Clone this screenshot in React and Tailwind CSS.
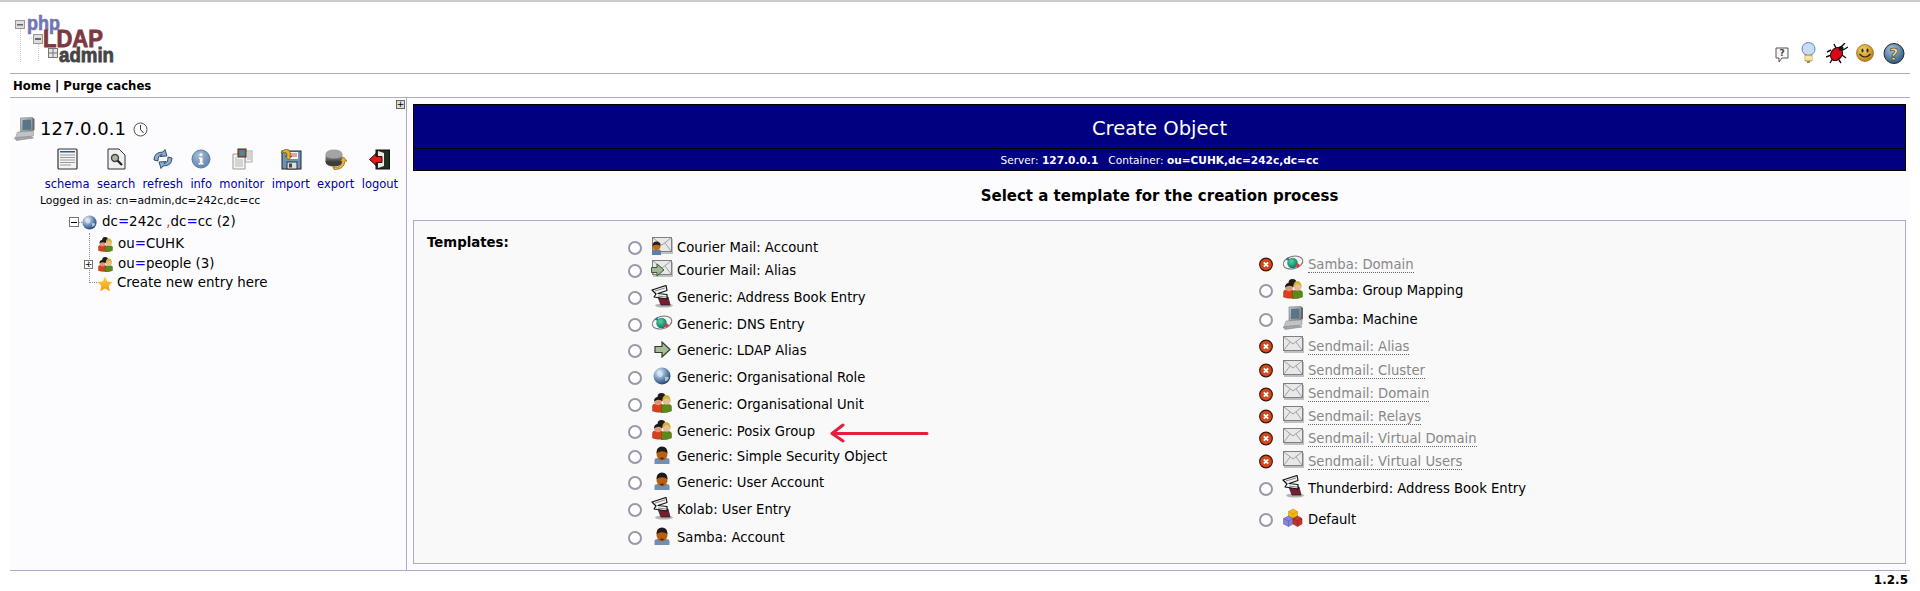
import React from 'react'

function Defs() {
  return (
    <svg className="absolute w-0 h-0">
      <defs>
        <radialGradient id="globe" cx="35%" cy="30%" r="75%">
          <stop offset="0%" stopColor="#f2f6fa" />
          <stop offset="45%" stopColor="#7ea2c8" />
          <stop offset="100%" stopColor="#1d3f66" />
        </radialGradient>
        <radialGradient id="dnsglobe" cx="40%" cy="35%" r="70%">
          <stop offset="0%" stopColor="#5fd08a" />
          <stop offset="60%" stopColor="#1f9a78" />
          <stop offset="100%" stopColor="#15608e" />
        </radialGradient>
        <radialGradient id="smile" cx="40%" cy="30%" r="75%">
          <stop offset="0%" stopColor="#f8d060" />
          <stop offset="100%" stopColor="#b87a10" />
        </radialGradient>
        <radialGradient id="help" cx="40%" cy="30%" r="75%">
          <stop offset="0%" stopColor="#a9c6dc" />
          <stop offset="100%" stopColor="#2a5577" />
        </radialGradient>
        <radialGradient id="info" cx="40%" cy="30%" r="75%">
          <stop offset="0%" stopColor="#a8c0dc" />
          <stop offset="100%" stopColor="#5a7ea8" />
        </radialGradient>
        <linearGradient id="star" x1="0" y1="0" x2="0" y2="1">
          <stop offset="0%" stopColor="#ffd23c" />
          <stop offset="100%" stopColor="#f79a10" />
        </linearGradient>
        <linearGradient id="disk" x1="0" y1="0" x2="0" y2="1">
          <stop offset="0%" stopColor="#b0b0b0" />
          <stop offset="100%" stopColor="#3c3c3c" />
        </linearGradient>
        <linearGradient id="pc" x1="0" y1="0" x2="1" y2="1">
          <stop offset="0%" stopColor="#c4c8cc" />
          <stop offset="100%" stopColor="#7c8288" />
        </linearGradient>
      </defs>
    </svg>
  )
}

function Logo() {
  const font = "'Liberation Sans', sans-serif"
  return (
    <svg width="104" height="58" viewBox="0 -6 104 58">
      <g stroke="#c8c8c8" strokeDasharray="1 1" fill="none">
        <path d="M5.5 13V48M23.5 28V48M14 24H18M33 39H38" />
      </g>
      <rect x="0.5" y="6.5" width="9" height="8" fill="#ddd" stroke="#999" />
      <rect x="2" y="10" width="6" height="1.5" fill="#666" />
      <rect x="18.5" y="20.5" width="9" height="9" fill="#ddd" stroke="#999" />
      <rect x="20" y="24" width="6" height="2" fill="#666" />
      <rect x="33.5" y="34.5" width="9" height="9" fill="#e4e4e4" stroke="#777" />
      <path d="M38 35V43M34 39H42" stroke="#777" />
      <text x="12" y="16" fontFamily={font} fontWeight="700" fontSize="20" fill="#7474b4" stroke="#7474b4" strokeWidth="0.6" textLength="33" lengthAdjust="spacingAndGlyphs">php</text>
      <text x="28" y="33" fontFamily={font} fontWeight="700" fontSize="23" fill="#7c3a40" stroke="#7c3a40" strokeWidth="0.8" textLength="60" lengthAdjust="spacingAndGlyphs">LDAP</text>
      <text x="44" y="48" fontFamily={font} fontWeight="700" fontSize="21" fill="#444" stroke="#444" strokeWidth="0.8" textLength="55" lengthAdjust="spacingAndGlyphs">admin</text>
    </svg>
  )
}

function MailIcon({ children }) {
  return (
    <svg width="22" height="18" viewBox="0 0 22 18">
      <rect x="2" y="2" width="20" height="15" fill="#9a9a9a" opacity="0.6" />
      <rect x="1.5" y="0.5" width="19" height="14" fill="#e8e8e8" stroke="#808080" />
      <path d="M2 1L11 8L20 1M2 14L8 6M20 14L14 6" fill="none" stroke="#a0a0a0" />
      {children}
    </svg>
  )
}

const MailUser = () => (
  <MailIcon>
    <path d="M1 18V14.5Q1 12.5 4 12.5H7Q10 12.5 10 14.5V18Z" fill="#5f7fa8" />
    <circle cx="5.5" cy="9" r="4" fill="#c86a10" />
    <path d="M1.5 9Q1.5 4.5 5.5 4.5T9.5 9Q5.5 6.5 1.5 9Z" fill="#222" />
  </MailIcon>
)

const MailAlias = () => (
  <MailIcon>
    <path d="M0.5 7.5H6V4L13 10L6 16V12.5H0.5Z" fill="#a3b894" stroke="#3f5a34" />
  </MailIcon>
)

const BookIcon = () => (
  <svg width="22" height="23" viewBox="0 0 22 23">
    <ellipse cx="13" cy="20.5" rx="9" ry="2" fill="#b4b4b4" />
    <path d="M7 12L17 12L19 20L10 20Z" fill="#7c1c30" stroke="#222" strokeWidth="0.8" />
    <path d="M1 5L15 0.5L16 5.5L7 8.5L16 9.5L16 14L3 12L5 9Z" fill="#f6f6f6" stroke="#111" strokeWidth="1.2" strokeLinejoin="round" />
    <path d="M4 6L14 3M7 11L15 12" stroke="#777" strokeWidth="0.9" />
  </svg>
)

const DnsIcon = () => (
  <svg width="23" height="18" viewBox="0 0 23 18">
    <ellipse cx="11.5" cy="8.5" rx="10.5" ry="6.5" fill="#f4f4f4" stroke="#777" strokeWidth="1.1" transform="rotate(-15 11.5 8.5)" />
    <circle cx="11" cy="9" r="5.5" fill="url(#dnsglobe)" />
    <circle cx="16.5" cy="11.5" r="2" fill="#e23b3b" />
    <circle cx="6" cy="5" r="1.5" fill="#2d6fb4" />
  </svg>
)

const ArrowIcon = () => (
  <svg width="17" height="17" viewBox="0 0 17 17">
    <path d="M1 5.5H8V1L16 8.5L8 16V11.5H1Z" fill="#a8bb9a" stroke="#2f3f28" strokeWidth="1.2" />
  </svg>
)

const GlobeIcon = ({ size = 18 }) => (
  <svg width={size} height={size} viewBox="0 0 18 18">
    <circle cx="9" cy="9" r="8.5" fill="url(#globe)" />
    <path d="M4 6Q7 4 9 6T8 10Q5 11 4 6ZM12 10Q15 9 16 11Q14 15 12 14Z" fill="#dce4ee" opacity="0.7" />
  </svg>
)

const GroupIcon = ({ size = 20 }) => (
  <svg width={size} height={size} viewBox="0 0 20 20">
    <circle cx="9.5" cy="4" r="4" fill="#1c1c1c" />
    <path d="M0.5 18V13Q0.5 11 3 11H9Q11 11 11 14V19Q5 20 0.5 18Z" fill="#d8401c" stroke="#7c2410" strokeWidth="0.4" />
    <path d="M9.5 20V14Q9.5 11.5 12 11.5H17Q19.5 11.5 19.5 14V18Q15 20 9.5 20Z" fill="#5c8a18" stroke="#34500c" strokeWidth="0.4" />
    <circle cx="6" cy="8.5" r="3.8" fill="#d89878" />
    <path d="M2 8.5Q2 4 6 4T10 8Q6 5.5 2 8.5Z" fill="#181818" />
    <circle cx="14.5" cy="7.500" r="4" fill="#e8bc90" />
    <path d="M10.5 7.5Q10.5 2 14.5 2T18.5 9Q17.5 5 14 5Q12 6 10.5 7.5Z" fill="#d0b030" />
  </svg>
)

const UserIcon = () => (
  <svg width="16" height="18" viewBox="0 0 16 18">
    <path d="M0.5 18V14Q0.5 12 4 12H12Q15.5 12 15.5 14V18Z" fill="#6f8fb4" />
    <path d="M7 12L8 15L9 12Z" fill="#dfe8f0" />
    <ellipse cx="8" cy="8" rx="5.5" ry="6.5" fill="#b85e10" />
    <path d="M2.5 7Q2.5 0.5 8 0.5T13.5 7Q8 3.5 2.5 7Z" fill="#1e1a18" />
    <path d="M6 12Q8 15 10 12Q8 11 6 12Z" fill="#4a2408" />
  </svg>
)

const ComputerIcon = ({ className }) => (
  <svg className={className} viewBox="0 0 20 24">
    <path d="M6 1L18 0.5V14L6 15Z" fill="url(#pc)" stroke="#777" strokeWidth="0.6" />
    <path d="M8 3L16.5 2.5V12.5L8 13Z" fill="#5a7488" />
    <path d="M18 0.5L20 2V13L18 14Z" fill="#666" />
    <path d="M3 15L19 14V19L1 20.5Z" fill="#c0c4c8" stroke="#888" strokeWidth="0.5" />
    <path d="M0 21L16 19.5L19 21L2 23.5Z" fill="#a4a9ae" stroke="#777" strokeWidth="0.5" />
  </svg>
)

const CubesIcon = () => (
  <svg width="22" height="20" viewBox="0 0 22 20">
    <path d="M11 1L15.5 3.5V9L11 11.5L6.5 9V3.5Z" fill="#f7b90f" stroke="#b88410" strokeWidth="0.5" />
    <path d="M6.5 3.5L11 6L15.5 3.5M11 6V11.5" fill="none" stroke="#b88410" strokeWidth="0.5" />
    <path d="M6.5 8L11 10.5V16L6.5 18.5L1.5 16V10.5Z" fill="#8484dc" stroke="#55559c" strokeWidth="0.5" />
    <path d="M1.5 10.5L6.5 13L11 10.5M6.5 13V18.5" fill="none" stroke="#55559c" strokeWidth="0.5" />
    <path d="M15.5 8L20 10.5V16L15.5 18.5L11 16V10.5Z" fill="#c4362c" stroke="#7c1c18" strokeWidth="0.5" />
    <path d="M11 10.5L15.5 13L20 10.5M15.5 13V18.5" fill="none" stroke="#7c1c18" strokeWidth="0.5" />
  </svg>
)

const StarIcon = () => (
  <svg width="16" height="16" viewBox="0 0 16 16">
    <path d="M8 0.5L10.3 5.5L15.5 6.1L11.7 9.7L12.8 15.2L8 12.4L3.2 15.2L4.3 9.7L0.5 6.1L5.7 5.5Z" fill="url(#star)" />
  </svg>
)

const ErrorIcon = () => (
  <svg width="15" height="15" viewBox="0 0 15 15">
    <circle cx="7.5" cy="7.5" r="6.8" fill="#d4481e" stroke="#3c1408" strokeWidth="1.2" />
    <path d="M5.2 5.2L9.8 9.8M9.8 5.2L5.2 9.8" stroke="#fff" strokeWidth="2" />
  </svg>
)

const PlainMail = () => <MailIcon />

function Radio() {
  return <span className="w-[14px] h-[14px] rounded-full border-2 border-[#9898a8] bg-white shrink-0" />
}

function Row({ icon, label, rowClass, off, children }) {
  return (
    <div className={`relative flex items-center ${rowClass}`}>
      <span className="w-[14px] flex justify-center shrink-0">{off ? <ErrorIcon /> : <Radio />}</span>
      <span className="w-[22px] ml-[9px] mr-[4px] flex justify-center shrink-0 -mt-[4px]">{icon}</span>
      {off ? (
        <span className="text-[#888888] border-b border-dotted border-[#666666] leading-[15px]">{label}</span>
      ) : (
        <span className="text-black">{label}</span>
      )}
      {children}
    </div>
  )
}

const leftRows = [
  { label: 'Courier Mail: Account', icon: <MailUser />, rowClass: 'h-[24px]' },
  { label: 'Courier Mail: Alias', icon: <MailAlias />, rowClass: 'h-[22px]' },
  { label: 'Generic: Address Book Entry', icon: <BookIcon />, rowClass: 'h-[32px]' },
  { label: 'Generic: DNS Entry', icon: <DnsIcon />, rowClass: 'h-[22px]' },
  { label: 'Generic: LDAP Alias', icon: <ArrowIcon />, rowClass: 'h-[30px]' },
  { label: 'Generic: Organisational Role', icon: <GlobeIcon />, rowClass: 'h-[24px]' },
  { label: 'Generic: Organisational Unit', icon: <GroupIcon />, rowClass: 'h-[30px]' },
  { label: 'Generic: Posix Group', icon: <GroupIcon />, rowClass: 'h-[24px]', arrow: true },
  { label: 'Generic: Simple Security Object', icon: <UserIcon />, rowClass: 'h-[26px]' },
  { label: 'Generic: User Account', icon: <UserIcon />, rowClass: 'h-[26px]' },
  { label: 'Kolab: User Entry', icon: <BookIcon />, rowClass: 'h-[28px]' },
  { label: 'Samba: Account', icon: <UserIcon />, rowClass: 'h-[28px]' },
]

const rightRows = [
  { label: 'Samba: Domain', icon: <DnsIcon />, rowClass: 'h-[24px]', off: true },
  { label: 'Samba: Group Mapping', icon: <GroupIcon />, rowClass: 'h-[28px]' },
  { label: 'Samba: Machine', icon: <ComputerIcon className="w-[20px] h-[24px]" />, rowClass: 'h-[30px]' },
  { label: 'Sendmail: Alias', icon: <PlainMail />, rowClass: 'h-[24px]', off: true },
  { label: 'Sendmail: Cluster', icon: <PlainMail />, rowClass: 'h-[24px]', off: true },
  { label: 'Sendmail: Domain', icon: <PlainMail />, rowClass: 'h-[23px]', off: true },
  { label: 'Sendmail: Relays', icon: <PlainMail />, rowClass: 'h-[22px]', off: true },
  { label: 'Sendmail: Virtual Domain', icon: <PlainMail />, rowClass: 'h-[22px]', off: true },
  { label: 'Sendmail: Virtual Users', icon: <PlainMail />, rowClass: 'h-[24px]', off: true },
  { label: 'Thunderbird: Address Book Entry', icon: <BookIcon />, rowClass: 'h-[30px]' },
  { label: 'Default', icon: <CubesIcon />, rowClass: 'h-[32px]' },
]

const tools = [
  {
    label: 'schema',
    icon: (
      <svg width="21" height="22" viewBox="0 0 21 22">
        <rect x="1" y="1" width="19" height="20" rx="1" fill="#f4f4f4" stroke="#333" strokeWidth="1.2" />
        <rect x="3" y="3" width="15" height="1.5" fill="#2c5a9c" />
        <path d="M3 7H18M3 9.5H18M3 12H18M3 14.5H18M3 17H14" stroke="#999" strokeWidth="1.2" />
      </svg>
    ),
  },
  {
    label: 'search',
    icon: (
      <svg width="19" height="22" viewBox="0 0 19 22">
        <path d="M1 1H12L18 7V21H1Z" fill="#f0f0f0" stroke="#333" />
        <circle cx="8" cy="10" r="3.5" fill="#a8b8a0" stroke="#444" strokeWidth="1.4" />
        <path d="M10.5 12.5L15 17" stroke="#222" strokeWidth="2.2" />
      </svg>
    ),
  },
  {
    label: 'refresh',
    icon: (
      <svg width="22" height="20" viewBox="0 0 22 20">
        <path d="M2 11Q2 3 11 3L13 0.5L15 7L8 7.5L10 5.5Q6 6 6 12Z" fill="#8eaccc" stroke="#26405c" strokeWidth="0.9" />
        <path d="M20 9Q20 17 11 17L9 19.5L7 13L14 12.5L12 14.5Q16 14 16 8Z" fill="#8eaccc" stroke="#26405c" strokeWidth="0.9" />
      </svg>
    ),
  },
  {
    label: 'info',
    icon: (
      <svg width="20" height="20" viewBox="0 0 20 20">
        <circle cx="10" cy="10" r="9" fill="url(#info)" stroke="#5c7ca0" />
        <circle cx="10" cy="5.5" r="1.6" fill="#fff" />
        <path d="M8 8.5H11.5V14H12.5V15.5H7.5V14H8.8V10H8Z" fill="#fff" />
      </svg>
    ),
  },
  {
    label: 'monitor',
    icon: (
      <svg width="22" height="22" viewBox="0 0 22 22">
        <rect x="14" y="3" width="7" height="11" fill="#f4f4f0" stroke="#aaa" />
        <path d="M2 6H14V21H2Z" fill="#f4f4f0" stroke="#999" />
        <rect x="7" y="1" width="8" height="8" fill="#8c6c50" stroke="#333" />
        <rect x="9" y="3" width="4" height="4" fill="#4c84ac" />
        <path d="M4 10H6M4 12H12M4 14H12M4 16H12M4 18H12M16 5H20M16 7H20M16 9H20M16 11H20" stroke="#b4b4b4" />
      </svg>
    ),
  },
  {
    label: 'import',
    icon: (
      <svg width="22" height="22" viewBox="0 0 22 22">
        <rect x="2" y="3" width="19" height="18" fill="#6c94b8" stroke="#222" />
        <rect x="7" y="4" width="11" height="7" fill="#f4f4f4" />
        <path d="M8 6H17M8 8H17" stroke="#d05050" />
        <rect x="7" y="14" width="10" height="7" fill="#ddd" stroke="#333" />
        <rect x="9" y="15.5" width="3" height="4" fill="#444" />
        <path d="M1 5Q4 0 9 2Q11 4 10 9L12 8L8.5 12L5 8L7 8.5Q7.5 4.5 5 4.5Q3 5 1 5Z" fill="#e8b024" stroke="#6c4c08" strokeWidth="0.7" />
      </svg>
    ),
  },
  {
    label: 'export',
    icon: (
      <svg width="22" height="21" viewBox="0 0 22 21">
        <ellipse cx="9" cy="13" rx="8.5" ry="4.5" fill="#3c3c3c" />
        <rect x="0.5" y="5" width="17" height="8" fill="url(#disk)" />
        <ellipse cx="9" cy="5" rx="8.5" ry="4.5" fill="#a4a4a4" />
        <path d="M8 18Q16 20 17 12L15 12L18.5 8L22 12L20 12Q19 21 9 20.5Z" fill="#e8b82c" stroke="#6c4c08" strokeWidth="0.6" />
      </svg>
    ),
  },
  {
    label: 'logout',
    icon: (
      <svg width="21" height="21" viewBox="0 0 21 21">
        <rect x="7" y="1" width="13.5" height="19" fill="#203020" stroke="#111" />
        <path d="M9 2L15 4V17L9 19Z" fill="#e8ece4" />
        <path d="M0.5 10.5L7 4.5V7.5H13V13.5H7V16.5Z" fill="#d8201c" stroke="#400" />
      </svg>
    ),
  },
]

function Tree() {
  return (
    <div className="relative ml-[59px] mt-[3px] text-[13.4px] text-black">
      <div className="flex items-center h-[22px]">
        <span className="w-[10px] h-[10px] border border-[#777777] bg-white flex items-center justify-center shrink-0">
          <span className="w-[6px] h-px bg-black" />
        </span>
        <span className="w-[3px] border-t border-dotted border-[#888888]" />
        <GlobeIcon size={15} />
        <span className="ml-[5px]">
          dc<span className="text-[#0000ff]">=</span>242c<span className="text-[#ff2020]"> ,</span>dc<span className="text-[#0000ff]">=</span>cc (2)
        </span>
      </div>
      <div className="flex items-center h-[23px] ml-[29px] relative">
        <GroupIcon size={15} />
        <span className="ml-[5px]">ou<span className="text-[#0000ff]">=</span>CUHK</span>
      </div>
      <div className="flex items-center h-[17px] ml-[29px] relative">
        <span className="absolute -left-[14px] w-[9px] h-[9px] border border-[#777777] bg-white flex items-center justify-center text-[9px] leading-none">+</span>
        <GroupIcon size={15} />
        <span className="ml-[5px]">ou<span className="text-[#0000ff]">=</span>people (3)</span>
      </div>
      <div className="flex items-center h-[21px] ml-[28px] relative">
        <StarIcon />
        <span className="ml-[4px]">Create new entry here</span>
      </div>
      {/* tree connector */}
      <span className="absolute left-[20px] top-[22px] w-[8px] h-[50px] border-l border-b border-dotted border-[#888888]" />
    </div>
  )
}

export default function App() {
  return (
    <div className="relative w-[1920px] h-[591px] bg-white border-t-2 border-[#cccccc] px-[10px] font-['DejaVu_Sans',sans-serif] flex flex-col overflow-hidden">
      <Defs />

      {/* Header */}
      <div className="h-[71px] flex justify-between shrink-0">
        <div className="pl-[5px] pt-[6px]">
          <Logo />
        </div>
        <div className="flex items-end pb-[9px] pr-[5px]">
          <svg className="mb-[1px]" width="14" height="16" viewBox="0 0 14 16">
            <path d="M1 1H13V11H7L4 15V11H1Z" fill="#f8f8f8" stroke="#555" />
            <text x="7" y="9" fontSize="9" fontWeight="700" textAnchor="middle" fill="#444" fontFamily="'DejaVu Sans', sans-serif">?</text>
          </svg>
          <svg className="ml-[12px]" width="15" height="22" viewBox="0 0 15 22">
            <circle cx="7.5" cy="7" r="6.5" fill="#c8dcf4" stroke="#5c84b8" />
            <rect x="4" y="13" width="7" height="6" fill="#eeca50" stroke="#a88428" strokeWidth="0.6" />
            <path d="M4 15H11M4 17H11" stroke="#fff" />
            <rect x="6" y="19" width="3" height="2" fill="#888" />
          </svg>
          <svg className="ml-[10px]" width="22" height="21" viewBox="0 0 22 21">
            <path d="M1 9L5 7M0 14L5 12M4 20L7 15M15 4L19 0M17 7L22 4M16 12L20 15M13 17L15 20M10 5L8 1" stroke="#111" strokeWidth="1.4" />
            <ellipse cx="10.5" cy="11" rx="5.5" ry="7" transform="rotate(35 10.5 11)" fill="#d80818" stroke="#300" />
            <circle cx="15" cy="5.5" r="2.5" fill="#111" />
          </svg>
          <svg className="ml-[8px] mb-[2px]" width="18" height="18" viewBox="0 0 18 18">
            <circle cx="9" cy="9" r="8.5" fill="url(#smile)" stroke="#7a5208" strokeWidth="0.6" />
            <ellipse cx="6.5" cy="6.5" rx="1" ry="2" fill="#222" />
            <ellipse cx="11.5" cy="6.5" rx="1" ry="2" fill="#222" />
            <path d="M3.5 10Q9 16 14.5 10" fill="none" stroke="#222" strokeWidth="1.2" />
          </svg>
          <svg className="ml-[9px]" width="22" height="21" viewBox="0 0 22 21">
            <circle cx="11" cy="10.5" r="10" fill="url(#help)" stroke="#223" />
            <text x="11" y="16.5" fontSize="16" fontWeight="700" textAnchor="middle" fill="#f4dc88" stroke="#222" strokeWidth="0.5" fontFamily="'DejaVu Sans', sans-serif">?</text>
          </svg>
        </div>
      </div>

      {/* Nav */}
      <div className="h-[25px] shrink-0 border-y border-[#aaaacc] pl-[3px] text-[11.7px] font-bold leading-[24px] text-black">
        Home | Purge caches
      </div>

      {/* Main */}
      <div className="flex flex-1 min-h-0 bg-[#fcfcff]">
        <aside className="w-[397px] shrink-0 border-r border-[#aaaacc] relative">
          <span className="absolute right-[1px] top-[2px] w-[9px] h-[9px] border border-[#666666] bg-[#dddddd] flex items-center justify-center text-[9px] leading-none text-black">+</span>

          <div className="flex items-center pl-[4px] mt-[19px] h-[24px]">
            <ComputerIcon className="w-[21px] h-[24px]" />
            <span className="ml-[5px] text-[18px] leading-none text-black">127.0.0.1</span>
            <svg className="ml-[7px]" width="15" height="15" viewBox="0 0 15 15">
              <circle cx="7.5" cy="7.5" r="6.5" fill="#fff" stroke="#555" />
              <path d="M7.5 3V7.5L10.5 11" fill="none" stroke="#333" />
            </svg>
          </div>

          <div className="flex mt-[6px] ml-[31px] text-[11.5px] text-[#0000a8] leading-[16px]">
            {tools.map((t) => (
              <div key={t.label} className="flex flex-col items-center px-[3.7px]">
                <span className="h-[24px] flex items-center">{t.icon}</span>
                <span className="mt-[5px]">{t.label}</span>
              </div>
            ))}
          </div>

          <div className="ml-[30px] mt-[2px] text-[10.8px] leading-[14px] text-black">
            Logged in as: cn=admin,dc=242c,dc=cc
          </div>

          <Tree />
        </aside>

        <main className="flex-1 pl-[6px] pr-[4px] pt-[6px]">
          <div className="border border-black bg-[#000080] text-white text-center">
            <div className="h-[44px] border-b border-black text-[19.6px] leading-[47px]">Create Object</div>
            <div className="h-[21px] text-[10.6px] leading-[23px]">
              Server: <b>127.0.0.1</b>&nbsp;&nbsp;&nbsp;Container: <b>ou=CUHK,dc=242c,dc=cc</b>
            </div>
          </div>

          <h3 className="mt-[15px] h-[34px] text-center text-[15px] font-bold text-black leading-[20px]">
            Select a template for the creation process
          </h3>

          <div className="h-[344px] border border-[#aaaacc] bg-[#f9f9f9] flex items-center pr-[10px] text-[13.2px]">
            <div className="self-start pl-[13px] pt-[12px] w-[214px] font-bold text-[13.3px] text-black">Templates:</div>
            <div className="w-[631px] shrink-0 mt-[4px]">
              {leftRows.map((r) => (
                <Row key={r.label} {...r}>
                  {r.arrow && (
                    <svg className="absolute left-[201px] top-[3px]" width="100" height="20" viewBox="0 0 100 20">
                      <path d="M98 10.5H3M14 2L3 10.5L14 18" fill="none" stroke="#e81c3c" strokeWidth="3" strokeLinecap="round" strokeLinejoin="round" />
                    </svg>
                  )}
                </Row>
              ))}
            </div>
            <div className="mt-[4px]">
              {rightRows.map((r) => (
                <Row key={r.label} {...r} />
              ))}
            </div>
          </div>
        </main>
      </div>

      {/* Footer */}
      <div className="h-[21px] shrink-0 border-t border-[#aaaacc] text-right text-[12px] font-bold leading-[18px] pr-[2px] text-black">
        1.2.5
      </div>
    </div>
  )
}
